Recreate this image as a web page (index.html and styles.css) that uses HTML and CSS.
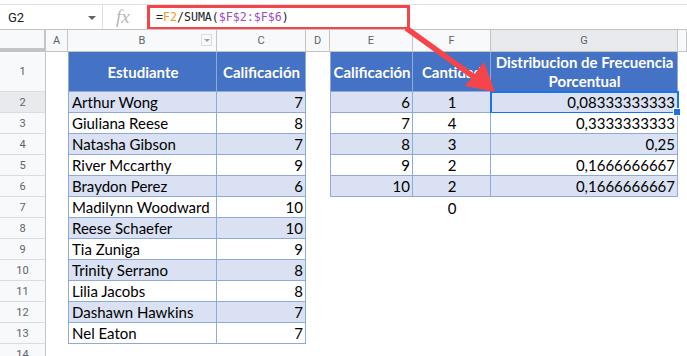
FILE: index.html
```html
<!DOCTYPE html>
<html lang="es">
  <head>
    <meta charset="UTF-8" />
    <title>Distribucion de Frecuencia Porcentual</title>
    <link rel="stylesheet" href="styles.css">
  </head>
  <body>
    <div class="page">
      <!-- formula bar -->
      <div class="formula-bar">
        <div class="name-box">
          <span>G2</span>
          <span class="caret"></span>
        </div>
        <div class="fx">fx</div>
        <div class="formula">=<span class="ref-a">F2</span>/SUMA(<span class="ref-b">$F$2:$F$6</span>)</div>
        <div class="callout"></div>
      </div>

      <!-- sheet grid -->
      <div class="sheet">
        <div class="corner"></div>
        <div class="col-head">A</div>
        <div class="col-head">B<span class="filter"></span></div>
        <div class="col-head">C</div>
        <div class="col-head">D</div>
        <div class="col-head">E</div>
        <div class="col-head">F</div>
        <div class="col-head active">G</div>
        <div class="col-head"></div>

        <div class="row-head">1</div>
        <div class="blank"></div>
        <div class="cell hdr first">Estudiante</div>
        <div class="cell hdr">Calificación</div>
        <div class="blank"></div>
        <div class="cell hdr first">Calificación</div>
        <div class="cell hdr">Cantidad</div>
        <div class="cell hdr wrap">Distribucion de Frecuencia Porcentual</div>
        <div class="blank"></div>

        <div class="row-head active">2</div>
        <div class="blank"></div>
        <div class="cell band first">Arthur Wong</div>
        <div class="cell band num">7</div>
        <div class="blank"></div>
        <div class="cell band first num">6</div>
        <div class="cell band ctr">1</div>
        <div class="cell band num selected">0,08333333333</div>
        <div class="blank"></div>

        <div class="row-head">3</div>
        <div class="blank"></div>
        <div class="cell first">Giuliana Reese</div>
        <div class="cell num">8</div>
        <div class="blank"></div>
        <div class="cell first num">7</div>
        <div class="cell ctr">4</div>
        <div class="cell num">0,3333333333</div>
        <div class="blank"></div>

        <div class="row-head">4</div>
        <div class="blank"></div>
        <div class="cell band first">Natasha Gibson</div>
        <div class="cell band num">7</div>
        <div class="blank"></div>
        <div class="cell band first num">8</div>
        <div class="cell band ctr">3</div>
        <div class="cell band num">0,25</div>
        <div class="blank"></div>

        <div class="row-head">5</div>
        <div class="blank"></div>
        <div class="cell first">River Mccarthy</div>
        <div class="cell num">9</div>
        <div class="blank"></div>
        <div class="cell first num">9</div>
        <div class="cell ctr">2</div>
        <div class="cell num">0,1666666667</div>
        <div class="blank"></div>

        <div class="row-head">6</div>
        <div class="blank"></div>
        <div class="cell band first">Braydon Perez</div>
        <div class="cell band num">6</div>
        <div class="blank"></div>
        <div class="cell band first num">10</div>
        <div class="cell band ctr">2</div>
        <div class="cell band num">0,1666666667</div>
        <div class="blank"></div>

        <div class="row-head">7</div>
        <div class="blank"></div>
        <div class="cell first">Madilynn Woodward</div>
        <div class="cell num">10</div>
        <div class="blank"></div>
        <div class="blank"></div>
        <div class="blank plain ctr">0</div>
        <div class="blank"></div>
        <div class="blank"></div>

        <div class="row-head">8</div>
        <div class="blank"></div>
        <div class="cell band first">Reese Schaefer</div>
        <div class="cell band num">10</div>
        <div class="blank"></div><div class="blank"></div><div class="blank"></div><div class="blank"></div><div class="blank"></div>

        <div class="row-head">9</div>
        <div class="blank"></div>
        <div class="cell first">Tia Zuniga</div>
        <div class="cell num">9</div>
        <div class="blank"></div><div class="blank"></div><div class="blank"></div><div class="blank"></div><div class="blank"></div>

        <div class="row-head">10</div>
        <div class="blank"></div>
        <div class="cell band first">Trinity Serrano</div>
        <div class="cell band num">8</div>
        <div class="blank"></div><div class="blank"></div><div class="blank"></div><div class="blank"></div><div class="blank"></div>

        <div class="row-head">11</div>
        <div class="blank"></div>
        <div class="cell first">Lilia Jacobs</div>
        <div class="cell num">8</div>
        <div class="blank"></div><div class="blank"></div><div class="blank"></div><div class="blank"></div><div class="blank"></div>

        <div class="row-head">12</div>
        <div class="blank"></div>
        <div class="cell band first">Dashawn Hawkins</div>
        <div class="cell band num">7</div>
        <div class="blank"></div><div class="blank"></div><div class="blank"></div><div class="blank"></div><div class="blank"></div>

        <div class="row-head">13</div>
        <div class="blank"></div>
        <div class="cell first">Nel Eaton</div>
        <div class="cell num">7</div>
        <div class="blank"></div><div class="blank"></div><div class="blank"></div><div class="blank"></div><div class="blank"></div>

        <div class="row-head">14</div>
      </div>

      <!-- arrow from the formula to the result cell -->
      <svg class="arrow" width="687" height="356" viewBox="0 0 687 356">
        <line x1="406" y1="28" x2="474" y2="77" stroke="#f5444a" stroke-width="5.5" />
        <polygon points="495,92 465,86 484,62" fill="#f5444a" />
      </svg>
    </div>
  </body>
</html>
```

FILE: styles.css
```css
body {
  margin: 0;
  font-family: Roboto, Arial, sans-serif;
  background: #ffffff;
  overflow: hidden;
}

.page {
  position: relative;
  width: 687px;
  height: 356px;
  overflow: hidden;
}

/* formula bar */
.formula-bar {
  position: relative;
  margin-top: 4px;
  height: 24px;
  border-top: 1px solid #e1e1e1;
  display: flex;
  align-items: center;
}

.name-box {
  width: 103px;
  height: 100%;
  display: flex;
  align-items: center;
  justify-content: space-between;
  padding: 0 6px 0 8px;
  box-sizing: border-box;
  font-size: 13px;
  color: #202124;
  border-right: 1px solid #e1e1e1;
}

.caret {
  width: 0;
  height: 0;
  border-left: 4px solid transparent;
  border-right: 4px solid transparent;
  border-top: 4px solid #5f6368;
  margin-top: 2px;
}

.fx {
  width: 43px;
  padding-left: 13px;
  box-sizing: border-box;
  font-family: "Liberation Serif", serif;
  font-style: italic;
  font-size: 19px;
  color: #b8b8b8;
}

.formula {
  padding-left: 10px;
  font-family: "DejaVu Sans Mono", monospace;
  font-size: 11.6px;
  color: #202124;
}

.ref-a {
  color: #f7981d;
}

.ref-b {
  color: #9a4fc4;
}

.callout {
  position: absolute;
  left: 147px;
  top: 0;
  width: 263px;
  height: 25px;
  border: 3px solid #f5444a;
  box-sizing: border-box;
}

/* sheet */
.sheet {
  display: grid;
  grid-template-columns: 46px 22px 149px 89px 24px 83px 78px 187px 9px;
  grid-template-rows: 23px 40px repeat(13, 21px);
  font-family: Lato, "Open Sans", sans-serif;
  font-size: 15px;
  color: #000000;
}

.sheet > div {
  box-sizing: border-box;
  min-width: 0;
}

.corner {
  background: #f8f9fa;
  border-top: 1px solid #c4c4c4;
  border-right: 2px solid #c4c4c4;
  border-bottom: 4px solid #c4c4c4;
}

.col-head {
  position: relative;
  background: #f8f9fa;
  border-top: 1px solid #c4c4c4;
  border-right: 1px solid #c4c4c4;
  border-bottom: 1px solid #c4c4c4;
  font-family: Roboto, sans-serif;
  font-size: 11px;
  color: #5f6368;
  display: flex;
  align-items: center;
  justify-content: center;
}

.col-head.active,
.row-head.active {
  background: #e8eaed;
}

.filter {
  position: absolute;
  right: 4px;
  top: 4px;
  width: 11px;
  height: 12px;
  border: 1px solid #dadce0;
  box-sizing: border-box;
  background: #f8f9fa;
}

.filter::after {
  content: "";
  position: absolute;
  left: 2px;
  top: 4px;
  border-left: 3px solid transparent;
  border-right: 3px solid transparent;
  border-top: 3px solid #9aa0a6;
}

.row-head {
  background: #f8f9fa;
  border-right: 1px solid #c4c4c4;
  border-bottom: 1px solid #dcdcdc;
  font-family: Roboto, sans-serif;
  font-size: 11px;
  color: #5f6368;
  display: flex;
  align-items: center;
  justify-content: center;
}

.blank {
  background: #ffffff;
}

.cell {
  position: relative;
  background: #ffffff;
  border-right: 1px solid #8eaadb;
  border-bottom: 1px solid #8eaadb;
  padding: 0 2px 0 3px;
  display: flex;
  align-items: center;
  white-space: nowrap;
}

.cell.first {
  border-left: 1px solid #8eaadb;
}

.cell.band {
  background: #d9e1f2;
}

.cell.hdr {
  background: #4472c4;
  color: #ffffff;
  font-weight: 700;
  justify-content: center;
}

.cell.wrap {
  white-space: normal;
  text-align: center;
  line-height: 19px;
}

.num {
  justify-content: flex-end;
}

.ctr,
.blank.plain {
  display: flex;
  align-items: center;
  justify-content: center;
}

.selected {
  outline: 2px solid #1a73e8;
  outline-offset: -1px;
}

.selected::after {
  content: "";
  position: absolute;
  right: -4px;
  bottom: -4px;
  width: 6px;
  height: 6px;
  background: #1a73e8;
  border: 1px solid #ffffff;
  z-index: 2;
}

.arrow {
  position: absolute;
  left: 0;
  top: 0;
  pointer-events: none;
}
```
